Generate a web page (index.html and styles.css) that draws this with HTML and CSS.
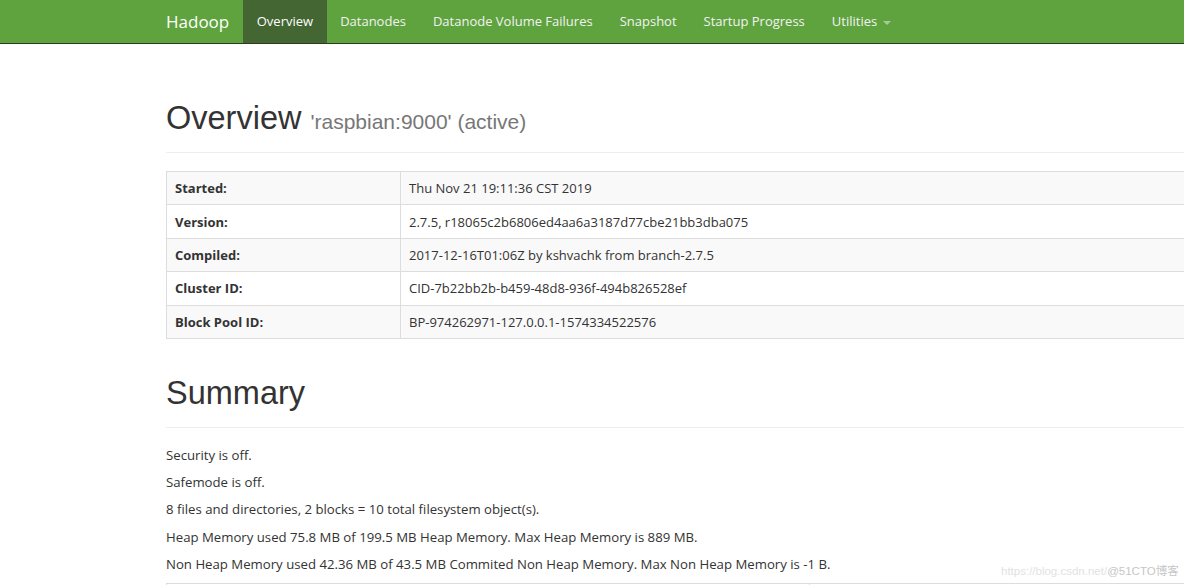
FILE: index.html
```html
<!DOCTYPE html>
<html>
<head>
<meta charset="utf-8">
<link rel="stylesheet" href="styles.css">
</head>
<body>
<nav class="navbar">
  <div class="nav-inner">
    <span class="brand">Hadoop</span>
    <ul class="nav">
      <li class="active"><a>Overview</a></li>
      <li><a>Datanodes</a></li>
      <li><a>Datanode Volume Failures</a></li>
      <li><a>Snapshot</a></li>
      <li><a>Startup Progress</a></li>
      <li><a>Utilities <span class="caret"></span></a></li>
    </ul>
  </div>
</nav>
<div class="container">
  <div class="page-header overview">
    <h1>Overview <small>'raspbian:9000' (active)</small></h1>
  </div>
  <table class="info">
    <tr><th>Started:</th><td>Thu Nov 21 19:11:36 CST 2019</td></tr>
    <tr><th>Version:</th><td>2.7.5, r18065c2b6806ed4aa6a3187d77cbe21bb3dba075</td></tr>
    <tr><th>Compiled:</th><td>2017-12-16T01:06Z by kshvachk from branch-2.7.5</td></tr>
    <tr><th>Cluster ID:</th><td>CID-7b22bb2b-b459-48d8-936f-494b826528ef</td></tr>
    <tr><th>Block Pool ID:</th><td>BP-974262971-127.0.0.1-1574334522576</td></tr>
  </table>
  <div class="page-header summary">
    <h1>Summary</h1>
  </div>
  <p>Security is off.</p>
  <p>Safemode is off.</p>
  <p>8 files and directories, 2 blocks = 10 total filesystem object(s).</p>
  <p>Heap Memory used 75.8 MB of 199.5 MB Heap Memory. Max Heap Memory is 889 MB.</p>
  <p>Non Heap Memory used 42.36 MB of 43.5 MB Commited Non Heap Memory. Max Non Heap Memory is -1 B.</p>
  <table class="next"><tr><td class="c1"></td><td></td></tr></table>
</div>
<div class="watermark"><span class="wm-url">https://blog.csdn.net/</span><span class="wm-site">@51CTO博客</span></div>
</body>
</html>
```

FILE: styles.css
```css
html, body {
  margin: 0;
  padding: 0;
  overflow: hidden;
  background: #fff;
}
body {
  font-family: "Open Sans", "Noto Sans CJK SC", sans-serif;
  font-size: 13.2px;
  color: #333;
  width: 1184px;
  height: 585px;
}
.navbar {
  background: #5fa33e;
  height: 43px;
  border-bottom: 1px solid #2c3b22;
}
.nav-inner {
  display: flex;
  align-items: stretch;
  height: 43px;
  padding-left: 166px;
}
.brand {
  color: #fff;
  font-size: 17px;
  line-height: 43px;
  margin-right: 14px;
}
.nav {
  list-style: none;
  display: flex;
  margin: 0;
  padding: 0;
}
.nav li a {
  display: block;
  padding: 0 13.5px;
  line-height: 43px;
  color: #f2f2f2;
  font-size: 13px;
  white-space: nowrap;
}
.nav li.active a {
  background: #436633;
  color: #fff;
}
.caret {
  display: inline-block;
  width: 0;
  height: 0;
  border-top: 4px solid #a9c99a;
  border-left: 4px solid transparent;
  border-right: 4px solid transparent;
  vertical-align: middle;
  margin-left: 2px;
}
.container {
  margin-left: 166px;
  width: 1100px;
}
.page-header {
  border-bottom: 1px solid #eee;
}
.page-header.overview {
  margin-top: 56px;
  padding-bottom: 12px;
  margin-bottom: 18px;
}
.page-header.summary {
  margin-top: 36px;
  padding-bottom: 16px;
  margin-bottom: 19px;
}
.page-header h1 {
  font-family: "Liberation Sans", Arial, sans-serif;
  font-weight: normal;
  font-size: 32.5px;
  line-height: 36px;
  margin: 0;
  color: #333;
}
.page-header h1 small {
  font-size: 21px;
  color: #777;
}
table.info {
  width: 100%;
  border-collapse: collapse;
  border: 1px solid #ddd;
}
table.info th, table.info td {
  border: 1px solid #ddd;
  text-align: left;
  padding: 0 8px;
  height: 32.4px;
  font-size: 13px;
}
table.info th {
  width: 217px;
  font-weight: bold;
}
table.info tr:nth-child(odd) {
  background: #f9f9f9;
}
p {
  margin: 0 0 10px;
  line-height: 17.25px;
}
table.next {
  width: 100%;
  border-collapse: collapse;
}
table.next td {
  border-top: 1px solid #ddd;
  border-left: 1px solid #ddd;
  height: 20px;
}
table.next td.c1 { width: 640px; }
.watermark {
  position: absolute;
  left: 1001px;
  top: 564px;
  white-space: nowrap;
  font-family: "Liberation Sans", "Noto Sans CJK SC", sans-serif;
  font-size: 11.5px;
  line-height: 15px;
}
.wm-url { color: #e2e2e2; }
.wm-site { color: #c6c6c6; }
```
